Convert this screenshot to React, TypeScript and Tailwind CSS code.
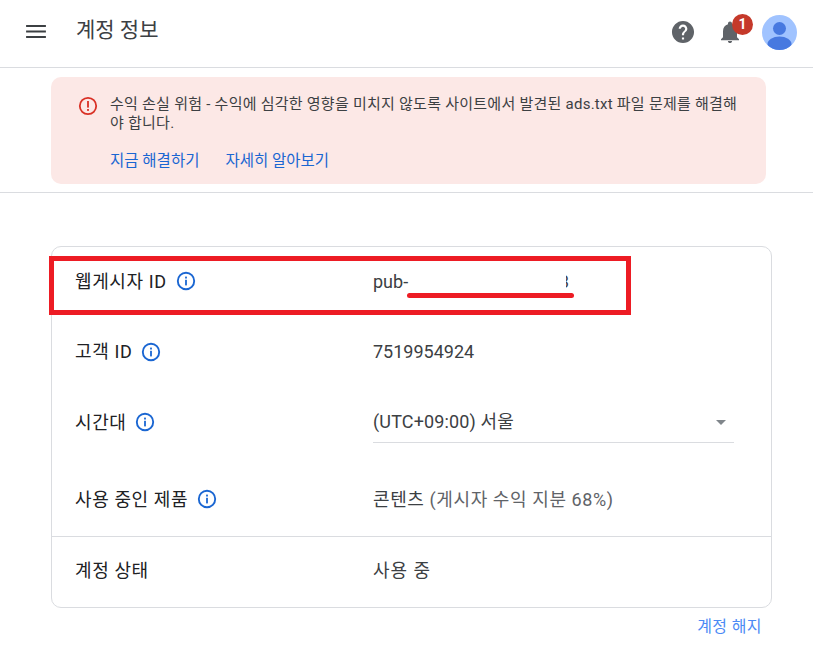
import { ReactNode } from 'react';

const FONT = "font-['Roboto','Noto_Sans_CJK_KR',sans-serif]";

function InfoIcon() {
  return (
    <svg width="20" height="20" viewBox="0 0 20 20" className="shrink-0 ml-[9px]">
      <circle cx="10" cy="10" r="8.200" fill="none" stroke="#1a66d2" strokeWidth="1.900" />
      <rect x="9.100" y="8.800" width="1.800" height="5.600" fill="#1a66d2" />
      <rect x="9.100" y="5.600" width="1.800" height="1.900" fill="#1a66d2" />
    </svg>
  );
}

function Row({ label, info, children, className }: { label: string; info?: boolean; children: ReactNode; className: string }) {
  return (
    <div className={`grid grid-cols-[298px_1fr] items-center pl-[23px] pr-[37px] pb-[2px] ${className}`}>
      <div className="flex items-center text-[18px] tracking-[0.6px] text-[#202124]">
        <span>{label}</span>
        {info && <InfoIcon />}
      </div>
      <div className="text-[18px] text-[#3c4043]">{children}</div>
    </div>
  );
}

export default function App() {
  return (
    <div className={`relative w-[813px] h-[664px] bg-white overflow-hidden ${FONT}`}>
      {/* Top bar */}
      <header className="h-[68px] border-b border-[#dadce0] flex items-center pl-[24px] pr-[16px]">
        <svg width="24" height="24" viewBox="0 0 24 24" className="shrink-0 mb-[5px]">
          <path d="M1 5h22v2.200H1zM1 11h22v2.200H1zM1 17h22v2.200H1z" fill="#3c4043" transform="translate(1.200 1.600) scale(0.900)" />
        </svg>
        <h1 className="ml-[28px] mb-[5px] text-[21px] font-normal text-[#3c4043]">계정 정보</h1>
        <div className="ml-auto flex items-center mb-[3px]">
          <svg width="26" height="26" viewBox="0 0 24 24" className="mr-[22px]">
            <path
              fill="#5f6368"
              d="M12 1.800C6.400 1.800 1.800 6.400 1.800 12S6.400 22.200 12 22.200 22.200 17.600 22.200 12 17.600 1.800 12 1.800zm1 17.200h-2v-2h2v2zm2.100-7.800-.9.900c-.8.800-1.200 1.400-1.200 3h-2v-.5c0-1.100.4-2.100 1.200-2.800l1.200-1.300c.4-.4.600-.9.600-1.400 0-1.100-.9-2-2-2s-2 .9-2 2H8c0-2.200 1.800-4 4-4s4 1.800 4 4c0 .9-.4 1.700-.9 2.100z"
            />
          </svg>
          <div className="relative w-[24px] h-[24px] mr-[20px]">
            <svg width="24" height="24" viewBox="0 0 24 24">
              <path
                fill="#5f6368"
                d="M12 23c1.200 0 2.100-.9 2.100-2.100H9.900c0 1.200.9 2.100 2.100 2.100zm7-5.800v-6c0-3.400-1.800-6.200-5-7V3.500C14 2.400 13.100 1.500 12 1.500s-2 .9-2 2v.7c-3.200.8-5 3.600-5 7v6l-2 2v1h18v-1l-2-2z"
              />
            </svg>
            <div className="absolute -top-[6px] left-[14px] w-[21px] h-[21px] rounded-full bg-[#c5392a] text-white text-[14px] font-bold flex items-center justify-center">
              1
            </div>
          </div>
          <svg width="35" height="35" viewBox="0 0 35 35" className="mt-[1px]">
            <defs>
              <clipPath id="avatar">
                <circle cx="17.500" cy="17.500" r="17.500" />
              </clipPath>
            </defs>
            <circle cx="17.500" cy="17.500" r="17.500" fill="#a0c3ff" />
            <g clipPath="url(#avatar)" fill="#4779e0">
              <circle cx="17.500" cy="13.500" r="6.500" />
              <ellipse cx="17.500" cy="29" rx="12" ry="7.500" />
            </g>
          </svg>
        </div>
      </header>

      {/* Warning banner */}
      <div className="pl-[51px] pr-[47px] pt-[9px] pb-[8px] border-b border-[#dadce0]">
        <div className="h-[107px] rounded-[10px] bg-[#fce8e6] flex pl-[27px] pr-[18px] pt-[18px]">
          <svg width="20" height="20" viewBox="0 0 20 20" className="shrink-0 mt-[1px]">
            <circle cx="10" cy="10" r="8.200" fill="none" stroke="#d93025" strokeWidth="1.800" />
            <rect x="9.100" y="5" width="1.800" height="6.600" fill="#d93025" />
            <rect x="9.100" y="13" width="1.800" height="1.900" fill="#d93025" />
          </svg>
          <div className="ml-[12px]">
            <p className="text-[15px] leading-[19px] tracking-[0.25px] break-all text-[#3c4043]">
              수익 손실 위험 - 수익에 심각한 영향을 미치지 않도록 사이트에서 발견된 ads.txt 파일 문제를 해결해야 합니다.
            </p>
            <div className="mt-[19px] flex gap-[26px] text-[15.500px] leading-[19px] text-[#1a66d2]">
              <a>지금 해결하기</a>
              <a>자세히 알아보기</a>
            </div>
          </div>
        </div>
      </div>

      {/* Account card */}
      <div className="mt-[53px] ml-[51px] w-[721px] h-[362px] rounded-[10px] border border-[#dadce0] flex flex-col">
        <Row label="웹게시자 ID" info className="h-[70px]">
          <span className="flex items-center">
            pub-
            <span className="ml-[158px] w-[3px] overflow-hidden flex justify-end">3</span>
          </span>
        </Row>
        <Row label="고객 ID" info className="h-[71px]">
          7519954924
        </Row>
        <Row label="시간대" info className="h-[70px]">
          <div className="relative h-[42px] flex items-center tracking-[0.15px] border-b border-[#dadce0]">
            (UTC+09:00) 서울
            <span className="absolute right-[8px] top-[19px] w-0 h-0 border-x-[5px] border-x-transparent border-t-[5px] border-t-[#80868b]" />
          </div>
        </Row>
        <Row label="사용 중인 제품" info className="h-[78px] pt-[6px]">
          <span className="tracking-[0.6px] text-[#5f6368]">
            <span className="text-[#3c4043]">콘텐츠</span> (게시자 수익 지분 68%)
          </span>
        </Row>
        <div className="border-t border-[#dadce0]" />
        <Row label="계정 상태" className="h-[68px]">
          <span className="tracking-[1px]">사용 중</span>
        </Row>
      </div>

      <div className="mt-[9px] w-[762px] text-right text-[16px] leading-[19px] tracking-[0.4px] text-[#4c8bf5]">계정 해지</div>

      {/* Red annotations drawn over the screenshot */}
      <div className="absolute left-[49px] top-[256px] w-[582px] h-[59px] border-[5px] border-[#ed1c24]" />
      <div className="absolute left-[407px] top-[293px] w-[167px] h-[5px] rounded-full bg-[#ed1c24]" />
    </div>
  );
}
